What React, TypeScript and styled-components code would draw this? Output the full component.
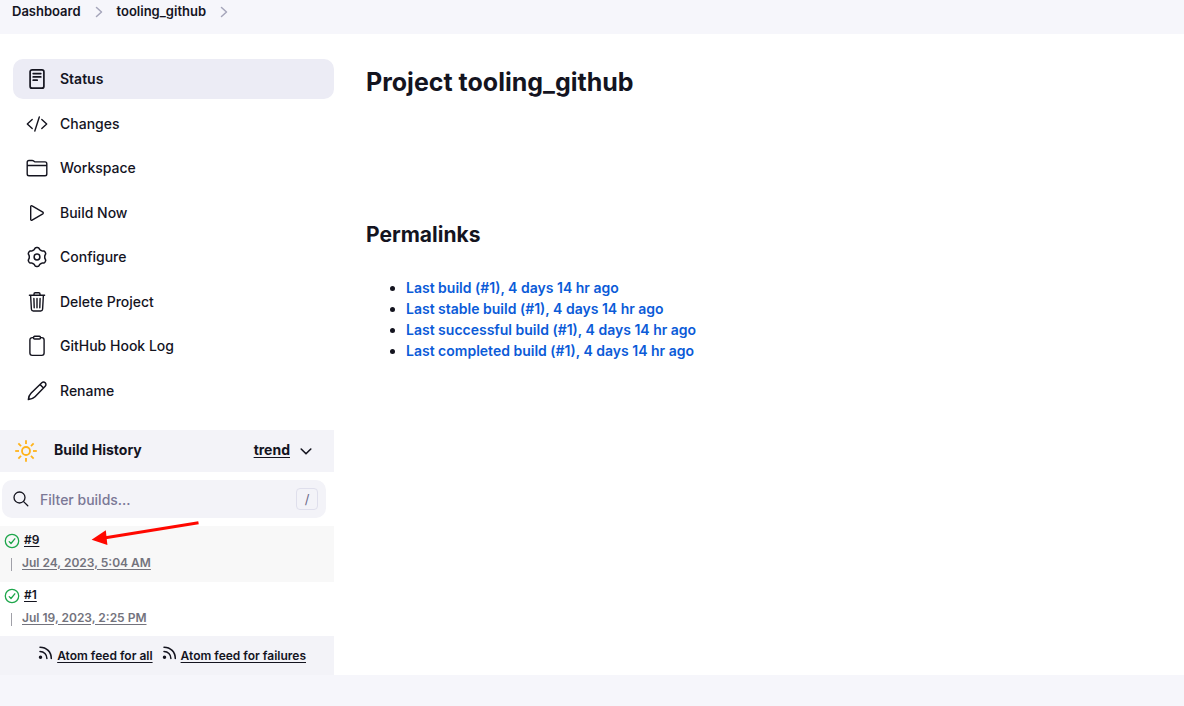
import React from "react";
import styled, { createGlobalStyle } from "styled-components";

const GlobalStyle = createGlobalStyle`
  *, *::before, *::after { box-sizing: border-box; }
  body {
    margin: 0;
    background: #f6f6fb;
    color: #14141f;
    font-family: Inter, "Liberation Sans", sans-serif;
    font-size: 14px;
    line-height: 21px;
  }
  a { color: inherit; }
`;

const Breadcrumbs = styled.nav`
  height: 34px;
  padding: 1px 12px 0;

  ol {
    display: flex;
    align-items: center;
    gap: 12px;
    margin: 0;
    padding: 0;
    list-style: none;
  }
  li {
    display: flex;
    align-items: center;
    gap: 12px;
  }
  a {
    font-size: 13px;
    font-weight: 600;
    text-decoration: none;
  }
  svg { color: #a5a5ba; }
`;

const Page = styled.div`
  display: flex;
  align-items: stretch;
  background: #fff;
`;

const SidePanel = styled.aside`
  flex: 0 0 334px;
  padding-top: 25px;
`;

const Tasks = styled.nav`
  display: flex;
  flex-direction: column;
  justify-content: space-between;
  height: 352px;
  margin: 0 0 19px 13px;
`;

const Task = styled.a<{ $active?: boolean }>`
  display: flex;
  align-items: center;
  gap: 11px;
  height: 40px;
  padding: 0 12px;
  border-radius: 10px;
  background: ${(p) => (p.$active ? "#ececf5" : "transparent")};
  font-weight: ${(p) => (p.$active ? 600 : 500)};
  line-height: 20px;
  text-decoration: none;

  svg { flex: none; }
`;

const HistoryHeader = styled.header`
  display: flex;
  align-items: center;
  height: 42px;
  padding: 0 20px 0 14px;
  background: #f3f3f8;
  font-weight: 700;
  line-height: 20px;

  h2 {
    flex: 1;
    margin: 0 0 0 16px;
    font-size: 14px;
    font-weight: 700;
  }
  h2, a { padding-bottom: 2px; }
  a { text-underline-offset: 2px; }
`;

const IconButton = styled.button`
  display: flex;
  margin-left: 8px;
  padding: 0;
  border: 0;
  background: none;
  color: inherit;
`;

const Search = styled.label`
  display: flex;
  align-items: center;
  gap: 10px;
  height: 38px;
  margin: 8px 8px 8px 2px;
  padding: 0 8px 0 10px;
  border-radius: 10px;
  background: #f3f3f8;

  input {
    flex: 1;
    min-width: 0;
    padding: 0;
    border: 0;
    outline: 0;
    background: none;
    color: inherit;
    font: inherit;
    font-weight: 500;
  }
  input::placeholder { color: #7b7896; opacity: 1; }
`;

const Key = styled.kbd`
  width: 22px;
  height: 22px;
  border: 1px solid #dfdfec;
  border-radius: 4px;
  color: #6c6988;
  font: inherit;
  font-size: 13px;
  line-height: 20px;
  text-align: center;
`;

const Builds = styled.ul`
  margin: 0;
  padding: 0;
  list-style: none;
`;

const Build = styled.li<{ $shaded?: boolean }>`
  position: relative;
  height: ${(p) => (p.$shaded ? 56 : 54)}px;
  padding: ${(p) => (p.$shaded ? 4 : 3)}px 4px 0;
  background: ${(p) => (p.$shaded ? "#f8f8f8" : "#fff")};
  font-size: 12px;
  font-weight: 600;

  a {
    padding-bottom: 2px;
    text-underline-offset: 2px;
  }
`;

const BuildName = styled.div`
  display: flex;
  align-items: center;
  gap: 4px;
  height: 21px;
`;

const BuildDate = styled.div`
  display: flex;
  align-items: center;
  gap: 10px;
  height: 24px;
  padding-left: 7px;
  color: #73737d;

  &::before {
    content: "";
    width: 1px;
    height: 13px;
    margin-top: 3px;
    background: #a0a0a8;
  }
`;

const Pointer = styled.svg`
  position: absolute;
  left: 90px;
  top: -6px;
  z-index: 1;
`;

const Feeds = styled.footer`
  display: flex;
  justify-content: flex-end;
  gap: 8px;
  height: 39px;
  padding: 9px 28px 0 0;
  background: #f3f3f8;
  font-size: 12px;
  font-weight: 600;

  a {
    display: flex;
    gap: 4px;
    text-decoration: none;
  }
  span { text-decoration: underline; text-underline-offset: 2px; }
`;

const Main = styled.main`
  flex: 1;
  min-width: 0;
  padding: 32px;

  h1 {
    margin: 0 0 121px;
    font-size: 25px;
    font-weight: 700;
    line-height: 32px;
  }
  h2 {
    margin: 0 0 26px;
    font-size: 21px;
    font-weight: 700;
    line-height: 32px;
  }
`;

const Permalinks = styled.ul`
  margin: 0;
  padding-left: 40px;

  a {
    color: #0b5bd8;
    font-weight: 600;
    text-decoration: none;
  }
`;

const Drawing = ({ children, size = 24, width = 1.4 }: { children: React.ReactNode; size?: number; width?: number }) => (
  <svg
    width={size}
    height={size}
    viewBox={`0 0 ${size} ${size}`}
    fill="none"
    stroke="currentColor"
    strokeWidth={width}
    strokeLinecap="round"
    strokeLinejoin="round"
    aria-hidden="true"
  >
    {children}
  </svg>
);

const Chevron = () => (
  <svg width="12" height="12" viewBox="0 0 12 12" fill="none" stroke="currentColor" strokeWidth="1.5" strokeLinecap="round" strokeLinejoin="round" aria-hidden="true">
    <path d="M3.5 1.5 8.5 6l-5 4.5" />
  </svg>
);

// Outline of a gear with six soft teeth, one of them pointing straight up.
const gearOutline = Array.from({ length: 120 }, (_, i) => {
  const angle = (i * Math.PI) / 60;
  const radius = 8.6 + 0.9 * Math.tanh(1.8 * Math.cos(6 * angle));
  const x = 12 + radius * Math.sin(angle);
  const y = 12 - radius * Math.cos(angle);
  return `${x.toFixed(2)},${y.toFixed(2)}`;
}).join(" ");

const tasks = [
  {
    label: "Status",
    icon: (
      <Drawing width={1.7}>
        <rect x="5.1" y="2.8" width="13.8" height="18.4" rx="2" />
        <path d="M8.2 6.6h7.6M8.2 9.9h7.6M8.2 13.2h4" />
      </Drawing>
    ),
  },
  {
    label: "Changes",
    icon: (
      <Drawing>
        <path d="M7.2 7.4 2.3 12l4.9 4.6M16.8 7.4l4.9 4.6-4.9 4.6M14.3 5 9.8 19" />
      </Drawing>
    ),
  },
  {
    label: "Workspace",
    icon: (
      <Drawing>
        <path d="M2.2 9.5V6.3c0-1 .8-1.8 1.8-1.8h3.2c.5 0 .9.2 1.3.4l.8.6c.4.3.8.4 1.3.4H20c1 0 1.8.8 1.8 1.8v10.200c0 1-.8 1.800-1.800 1.800H4c-1 0-1.800-.8-1.800-1.800V9.500h19.600" />
      </Drawing>
    ),
  },
  {
    label: "Build Now",
    icon: (
      <Drawing>
        <path d="M5.7 5.600v12.800c0 .8.8 1.200 1.400.8l10.700-6.400c.6-.4.6-1.200 0-1.600L7.100 4.800c-.6-.4-1.400 0-1.400.8z" />
      </Drawing>
    ),
  },
  {
    label: "Configure",
    icon: (
      <Drawing width={1.5}>
        <polygon points={gearOutline} />
        <circle cx="12" cy="12" r="2.9" />
      </Drawing>
    ),
  },
  {
    label: "Delete Project",
    icon: (
      <Drawing>
        <path d="M4.400 5.300h15.200M5.600 5.300l.8 13.900c.1 1.100.8 1.800 1.900 1.800h7.400c1.100 0 1.800-.7 1.900-1.800l.8-13.900M9 5.300V3.900c0-.7.5-1.200 1.200-1.200h3.600c.7 0 1.200.5 1.200 1.200v1.400M12 8.500v9.300M8.900 8.500l.3 9.300M15.100 8.500l-.3 9.300" />
      </Drawing>
    ),
  },
  {
    label: "GitHub Hook Log",
    icon: (
      <Drawing>
        <path d="M15.500 3.600h1.300c1.300 0 2.300 1 2.300 2.300v13.200c0 1.300-1 2.300-2.300 2.300H7.200c-1.300 0-2.300-1-2.300-2.300V5.900c0-1.300 1-2.300 2.300-2.300h1.300" />
        <rect x="8.500" y="2.300" width="7" height="2.700" rx="1.100" />
      </Drawing>
    ),
  },
  {
    label: "Rename",
    icon: (
      <Drawing width={1.5}>
        <path d="M3.400 20.600c.1-2.400 1-4.800 2.800-6.600L16.800 3.800a2.400 2.400 0 0 1 3.400 3.400L10 17.800c-1.800 1.800-4.200 2.700-6.600 2.800zM15 5.500l3.500 3.500" />
      </Drawing>
    ),
  },
];

const builds = [
  { name: "#9", date: "Jul 24, 2023, 5:04 AM" },
  { name: "#1", date: "Jul 19, 2023, 2:25 PM" },
];

const permalinks = ["Last build", "Last stable build", "Last successful build", "Last completed build"];

const rayAngles = [0, 45, 90, 135, 180, 225, 270, 315];

export default function App() {
  return (
    <>
      <GlobalStyle />
      <Breadcrumbs aria-label="Breadcrumbs">
        <ol>
          {["Dashboard", "tooling_github"].map((name) => (
            <li key={name}>
              <a href="#">{name}</a>
              <Chevron />
            </li>
          ))}
        </ol>
      </Breadcrumbs>
      <Page>
        <SidePanel>
          <Tasks aria-label="Project">
            {tasks.map(({ label, icon }, i) => (
              <Task key={label} href="#" $active={i === 0}>
                {icon}
                {label}
              </Task>
            ))}
          </Tasks>

          <section>
            <HistoryHeader>
              <svg width="24" height="24" viewBox="0 0 24 24" fill="none" stroke="#ffb31a" strokeWidth="1.8" aria-hidden="true">
                <circle cx="12" cy="12" r="4" />
                {rayAngles.map((angle) => (
                  <path key={angle} d="M12 1.200v3.800" transform={`rotate(${angle} 12 12)`} />
                ))}
              </svg>
              <h2>Build History</h2>
              <a href="#">trend</a>
              <IconButton aria-label="Collapse build history">
                <Drawing size={16} width={1.6}>
                  <path d="m3.200 6 4.800 4.800L12.800 6" />
                </Drawing>
              </IconButton>
            </HistoryHeader>

            <Search>
              <Drawing size={18} width={1.3}>
                <circle cx="7.500" cy="7.500" r="5.500" />
                <path d="m11.600 11.600 4.200 4.200" />
              </Drawing>
              <input type="text" placeholder="Filter builds..." aria-label="Filter builds" />
              <Key>/</Key>
            </Search>

            <Builds>
              {builds.map(({ name, date }, i) => (
                <Build key={name} $shaded={i === 0}>
                  <BuildName>
                    <svg width="16" height="16" viewBox="0 0 16 16" fill="none" stroke="#1ea64b" strokeWidth="1.3" strokeLinecap="round" strokeLinejoin="round" aria-label="Success">
                      <circle cx="8" cy="8" r="6.700" />
                      <path d="m5.200 8.600 1.800 1.900 3.800-4.700" />
                    </svg>
                    <a href="#">{name}</a>
                  </BuildName>
                  <BuildDate>
                    <a href="#">{date}</a>
                  </BuildDate>
                  {i === 0 && (
                    <Pointer width="112" height="28" viewBox="0 0 112 28" aria-hidden="true">
                      <path d="M108.500 2.800 14 18" stroke="#ff0800" strokeWidth="3" />
                      <path d="m1.600 19.800 14.200-9.500 1.600 14.700z" fill="#ff0800" />
                    </Pointer>
                  )}
                </Build>
              ))}
            </Builds>

            <Feeds>
              {["Atom feed for all", "Atom feed for failures"].map((label) => (
                <a key={label} href="#">
                  <Drawing size={16} width={1.5}>
                    <path d="M3 2.200c6.600 0 11.300 4.700 11.300 11.300M3 6.600c4 0 6.900 2.900 6.900 6.900" />
                    <circle cx="3.500" cy="12.300" r="1" fill="currentColor" />
                  </Drawing>
                  <span>{label}</span>
                </a>
              ))}
            </Feeds>
          </section>
        </SidePanel>

        <Main>
          <h1>Project tooling_github</h1>
          <h2>Permalinks</h2>
          <Permalinks>
            {permalinks.map((label) => (
              <li key={label}>
                <a href="#">{label} (#1), 4 days 14 hr ago</a>
              </li>
            ))}
          </Permalinks>
        </Main>
      </Page>
    </>
  );
}
